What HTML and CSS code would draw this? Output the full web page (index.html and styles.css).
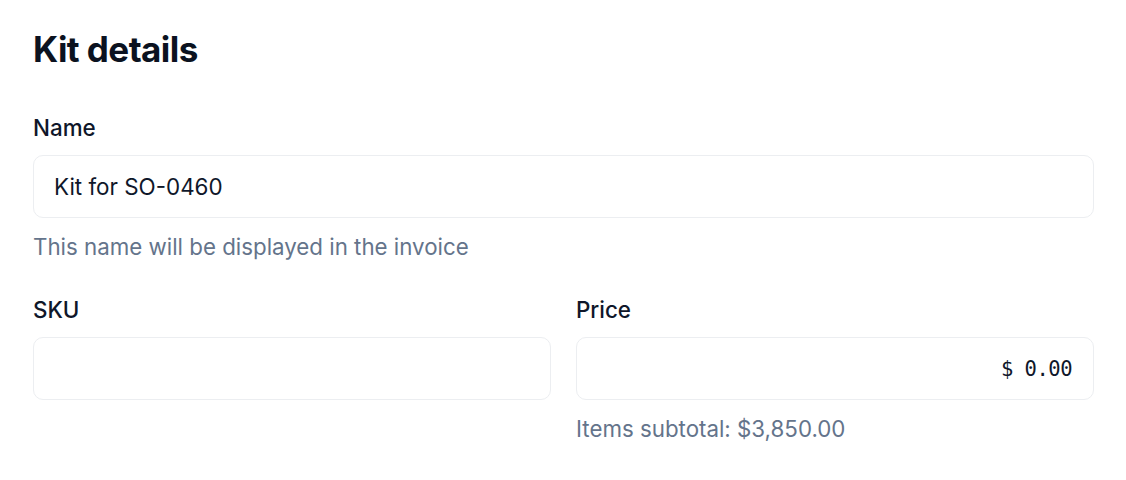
FILE: index.html
```html
<!DOCTYPE html>
<html lang="en">
<head>
<meta charset="utf-8">
<title>Kit details</title>
<link rel="stylesheet" href="styles.css">
</head>
<body>
<main class="panel">
  <h1 class="title">Kit details</h1>
  <div class="field">
    <label class="label" for="name">Name</label>
    <input class="input" id="name" type="text" value="Kit for SO-0460">
    <p class="hint">This name will be displayed in the invoice</p>
  </div>
  <div class="row">
    <div class="field">
      <label class="label" for="sku">SKU</label>
      <input class="input" id="sku" type="text" value="">
    </div>
    <div class="field">
      <label class="label" for="price">Price</label>
      <input class="input input-price" id="price" type="text" value="$ 0.00">
      <p class="hint">Items subtotal: $3,850.00</p>
    </div>
  </div>
</main>
</body>
</html>
```

FILE: styles.css
```css
* { box-sizing: border-box; }
html, body { margin: 0; padding: 0; background: #ffffff; }
body {
  font-family: Inter, "Noto Sans", sans-serif;
  color: #0f172a;
  -webkit-font-smoothing: antialiased;
}
.panel {
  padding: 27px 32px 0 33px;
  display: flex;
  flex-direction: column;
}
.title {
  margin: 0 0 41px;
  font-size: 35px;
  line-height: 44px;
  font-weight: 700;
  letter-spacing: -0.55px;
  color: #0b1220;
}
.field {
  display: flex;
  flex-direction: column;
  min-width: 0;
}
.label {
  font-size: 22.4px;
  line-height: 32px;
  font-weight: 500;
  color: #0f172a;
  margin-bottom: 11px;
}
.input {
  width: 100%;
  height: 63px;
  border: 1.5px solid #eceef1;
  border-radius: 10px;
  padding: 0 20px;
  font-family: Inter, "Noto Sans", sans-serif;
  font-size: 22.4px;
  color: #0f172a;
  background: #ffffff;
  outline: none;
}
.input-price {
  text-align: right;
  font-family: "DejaVu Sans Mono", monospace;
  font-size: 20.5px;
  letter-spacing: -0.5px;
  padding-right: 21px;
}
.hint {
  margin: 13px 0 0;
  font-size: 22.3px;
  line-height: 32px;
  color: #64748b;
}
.row {
  margin-top: 31px;
  display: grid;
  grid-template-columns: 1fr 1fr;
  column-gap: 25px;
}
```
